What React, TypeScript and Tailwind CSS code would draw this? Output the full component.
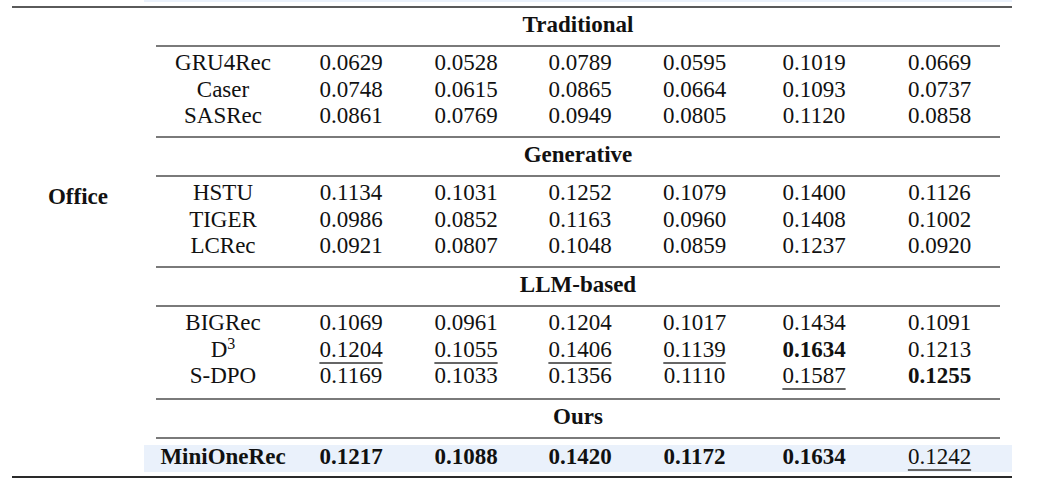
import React from "react";

type Cell = { v: string; bold?: boolean; under?: boolean };

type Row = { name: React.ReactNode; cells: Cell[] };

const c = (v: string, opts: Partial<Cell> = {}): Cell => ({ v, ...opts });

const sections: { title: string; rows: Row[]; height: string }[] = [
  {
    title: "Traditional",
    height: "h-[89px]",
    rows: [
      { name: "GRU4Rec", cells: ["0.0629", "0.0528", "0.0789", "0.0595", "0.1019", "0.0669"].map((v) => c(v)) },
      { name: "Caser", cells: ["0.0748", "0.0615", "0.0865", "0.0664", "0.1093", "0.0737"].map((v) => c(v)) },
      { name: "SASRec", cells: ["0.0861", "0.0769", "0.0949", "0.0805", "0.1120", "0.0858"].map((v) => c(v)) },
    ],
  },
  {
    title: "Generative",
    height: "h-[89px]",
    rows: [
      { name: "HSTU", cells: ["0.1134", "0.1031", "0.1252", "0.1079", "0.1400", "0.1126"].map((v) => c(v)) },
      { name: "TIGER", cells: ["0.0986", "0.0852", "0.1163", "0.0960", "0.1408", "0.1002"].map((v) => c(v)) },
      { name: "LCRec", cells: ["0.0921", "0.0807", "0.1048", "0.0859", "0.1237", "0.0920"].map((v) => c(v)) },
    ],
  },
  {
    title: "LLM-based",
    height: "h-[91px]",
    rows: [
      { name: "BIGRec", cells: ["0.1069", "0.0961", "0.1204", "0.1017", "0.1434", "0.1091"].map((v) => c(v)) },
      {
        name: (
          <>
            D<sup className="text-[16px]">3</sup>
          </>
        ),
        cells: [
          c("0.1204", { under: true }),
          c("0.1055", { under: true }),
          c("0.1406", { under: true }),
          c("0.1139", { under: true }),
          c("0.1634", { bold: true }),
          c("0.1213"),
        ],
      },
      {
        name: "S-DPO",
        cells: [c("0.1169"), c("0.1033"), c("0.1356"), c("0.1110"), c("0.1587", { under: true }), c("0.1255", { bold: true })],
      },
    ],
  },
];

const ours: Row = {
  name: "MiniOneRec",
  cells: [
    c("0.1217", { bold: true }),
    c("0.1088", { bold: true }),
    c("0.1420", { bold: true }),
    c("0.1172", { bold: true }),
    c("0.1634", { bold: true }),
    c("0.1242", { under: true }),
  ],
};

const cols = "grid grid-cols-[158px_98px_132px_96px_133px_106px_145px]";

function Value({ cell }: { cell: Cell }) {
  return (
    <div className="text-center">
      <span className={[cell.bold ? "font-bold" : "", cell.under ? "underline decoration-[1.5px] decoration-[#666] underline-offset-[5px]" : ""].join(" ")}>{cell.v}</span>
    </div>
  );
}

function MidRule() {
  return <div className="mx-[12px] h-[2px] bg-[#7a7a7a]" />;
}

function Header({ title }: { title: string }) {
  return <div className="h-[37px] flex items-center justify-center pb-[3px] font-bold leading-[26px]">{title}</div>;
}

export default function App() {
  return (
    <div className="w-[1042px] h-[486px] bg-white overflow-hidden text-[#111] text-[23px] font-['Liberation_Serif',serif]">
      {/* tail of the previous highlighted row */}
      <div className="pl-[144px]">
        <div className="w-[868px] h-[2px] bg-[#eaf1fb]" />
      </div>
      <div className="mt-[4px] ml-[12px] w-[1000px] h-[2px] bg-[#5a5a5a]" />

      <div className="flex pl-[12px]">
        <div className="w-[132px] shrink-0 pt-[176px] flex justify-center font-bold leading-[26px]">Office</div>

        <div className="w-[868px] shrink-0 flex flex-col">
          {sections.map((s) => (
            <React.Fragment key={s.title}>
              <Header title={s.title} />
              <MidRule />
              <div className={`${s.height} pt-[3px]`}>
                {s.rows.map((r, i) => (
                  <div key={i} className={`${cols} leading-[26.5px]`}>
                    <div className="text-center">{r.name}</div>
                    {r.cells.map((cell, j) => (
                      <Value key={j} cell={cell} />
                    ))}
                  </div>
                ))}
              </div>
              <MidRule />
            </React.Fragment>
          ))}

          <Header title="Ours" />
          <MidRule />
          <div className="h-[37px] pt-[6px]">
            <div className={`${cols} h-[27px] bg-[#eaf1fb] leading-[23px]`}>
              <div className="text-center font-bold">{ours.name}</div>
              {ours.cells.map((cell, j) => (
                <Value key={j} cell={cell} />
              ))}
            </div>
          </div>
        </div>
      </div>

      <div className="ml-[12px] w-[1000px] h-[2px] bg-[#2a2a2a]" />
    </div>
  );
}
